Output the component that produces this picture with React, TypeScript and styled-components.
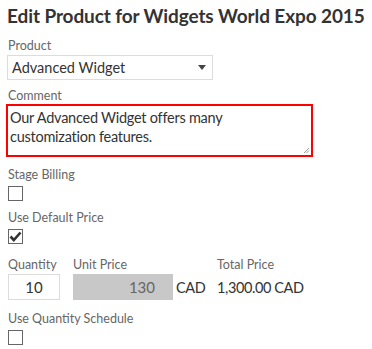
import React from "react";
import styled, { createGlobalStyle } from "styled-components";

const Global = createGlobalStyle`
  html, body { margin: 0; padding: 0; background: #fff; }
  body { font-family: Lato, "Open Sans", sans-serif; color: #444; }
  * { box-sizing: border-box; }
`;

const Page = styled.div`
  padding: 4px 8px 0 8px;
  width: 372px;
  height: 349px;
  overflow: hidden;
`;

const Title = styled.h1`
  margin: 0 0 0 -1px;
  font-size: 19px;
  font-weight: 700;
  color: #333;
  line-height: 24px;
  letter-spacing: -0.1px;
  white-space: nowrap;
`;

const Field = styled.div<{ $mt?: number }>`
  display: flex;
  flex-direction: column;
  margin-top: ${(p) => p.$mt ?? 0}px;
`;

const Label = styled.div`
  font-size: 12.5px;
  color: #666;
  line-height: 16px;
  height: 16px;
  white-space: nowrap;
`;

const Select = styled.div`
  margin-top: 1px;
  margin-left: -1px;
  width: 206px;
  height: 25px;
  border: 1px solid #dcdcdc;
  display: flex;
  align-items: center;
  justify-content: space-between;
  padding: 0 6px 0 4px;
  font-size: 14.5px;
  color: #333;
`;

const Arrow = styled.span`
  width: 0;
  height: 0;
  border-left: 4px solid transparent;
  border-right: 4px solid transparent;
  border-top: 5px solid #444;
`;

const TextArea = styled.div`
  position: relative;
  margin-left: -2px;
  width: 307px;
  height: 53px;
  border: 2px solid #ff0000;
  padding: 2px 2px;
  font-size: 14.5px;
  letter-spacing: -0.25px;
  line-height: 19px;
  color: #333;
  white-space: nowrap;
`;

const Grip = styled.svg`
  position: absolute;
  right: 1px;
  bottom: 1px;
`;

const Box = styled.div`
  margin-top: 3px;
  width: 15px;
  height: 15px;
  border: 1px solid #666;
  background: #fff;
  display: flex;
  align-items: center;
  justify-content: center;
`;

const Row = styled.div`
  display: flex;
  align-items: flex-start;
  margin-top: 13px;
`;

const Col = styled.div<{ $w: number }>`
  width: ${(p) => p.$w}px;
  display: flex;
  flex-direction: column;
`;

const Input = styled.div<{ $gray?: boolean; $w: number }>`
  margin-top: 1px;
  width: ${(p) => p.$w}px;
  height: 26px;
  border: 1px solid ${(p) => (p.$gray ? "#c8c8c8" : "#dcdcdc")};
  background: ${(p) => (p.$gray ? "#c8c8c8" : "#fff")};
  font-size: 15px;
  color: ${(p) => (p.$gray ? "#666" : "#333")};
  display: flex;
  align-items: center;
  justify-content: ${(p) => (p.$gray ? "flex-end" : "center")};
  padding-right: ${(p) => (p.$gray ? 17 : 0)}px;
`;

const InlineValue = styled.div<{ $ml: number }>`
  margin-left: ${(p) => p.$ml}px;
  height: 26px;
  margin-top: 1px;
  display: flex;
  align-items: center;
  font-size: 14.5px;
  letter-spacing: -0.4px;
  color: #333;
  white-space: nowrap;
`;

const PriceGroup = styled.div`
  display: flex;
`;

const Check = () => (
  <svg width="13" height="11" viewBox="0 0 13 11">
    <path d="M1.5 5.5 L4.8 9 L11.5 1.5" fill="none" stroke="#333" strokeWidth="2.6" />
  </svg>
);

export default function App() {
  return (
    <>
      <Global />
      <Page>
        <Title>Edit Product for Widgets World Expo 2015</Title>
        <Field $mt={10}>
          <Label>Product</Label>
          <Select>
            <span>Advanced Widget</span>
            <Arrow />
          </Select>
        </Field>
        <Field $mt={8}>
          <Label>Comment</Label>
          <TextArea>
            Our Advanced Widget offers many
            <br />
            customization features.
            <Grip width="7" height="7" viewBox="0 0 7 7">
              <path d="M6 1 L1 6 M6 3.5 L3.5 6" stroke="#999" strokeWidth="1" />
            </Grip>
          </TextArea>
        </Field>
        <Field $mt={10}>
          <Label>Stage Billing</Label>
          <Box />
        </Field>
        <Field $mt={9}>
          <Label>Use Default Price</Label>
          <Box>
            <Check />
          </Box>
        </Field>
        <Row>
          <Col $w={65}>
            <Label>Quantity</Label>
            <Input $w={52}>10</Input>
          </Col>
          <Col $w={144}>
            <Label>Unit Price</Label>
            <PriceGroup>
              <Input $gray $w={100}>130</Input>
              <InlineValue $ml={3}>CAD</InlineValue>
            </PriceGroup>
          </Col>
          <Col $w={120}>
            <Label>Total Price</Label>
            <InlineValue $ml={0}>1,300.00 CAD</InlineValue>
          </Col>
        </Row>
        <Field $mt={11}>
          <Label>Use Quantity Schedule</Label>
          <Box />
        </Field>
      </Page>
    </>
  );
}
